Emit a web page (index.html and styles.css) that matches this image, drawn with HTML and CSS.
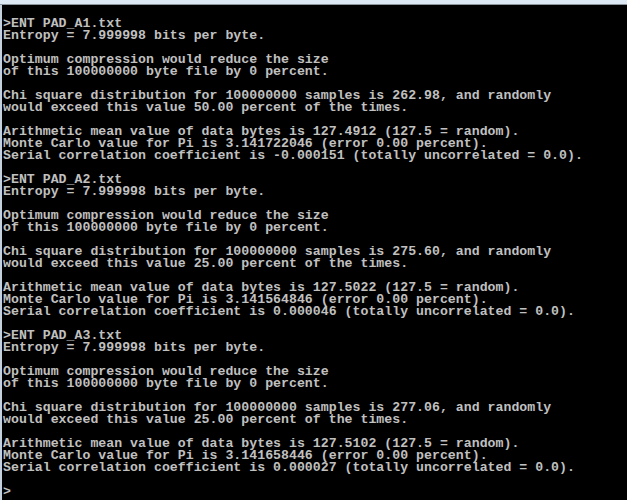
FILE: index.html
```html
<!DOCTYPE html>
<html>
<head>
<meta charset="utf-8">
<link rel="stylesheet" href="styles.css">
</head>
<body>
<div class="titlebar"></div>
<div class="console">
<pre class="output">&gt;ENT PAD_A1.txt
Entropy = 7.999998 bits per byte.

Optimum compression would reduce the size
of this 100000000 byte file by 0 percent.

Chi square distribution for 100000000 samples is 262.98, and randomly
would exceed this value 50.00 percent of the times.

Arithmetic mean value of data bytes is 127.4912 (127.5 = random).
Monte Carlo value for Pi is 3.141722046 (error 0.00 percent).
Serial correlation coefficient is -0.000151 (totally uncorrelated = 0.0).

&gt;ENT PAD_A2.txt
Entropy = 7.999998 bits per byte.

Optimum compression would reduce the size
of this 100000000 byte file by 0 percent.

Chi square distribution for 100000000 samples is 275.60, and randomly
would exceed this value 25.00 percent of the times.

Arithmetic mean value of data bytes is 127.5022 (127.5 = random).
Monte Carlo value for Pi is 3.141564846 (error 0.00 percent).
Serial correlation coefficient is 0.000046 (totally uncorrelated = 0.0).

&gt;ENT PAD_A3.txt
Entropy = 7.999998 bits per byte.

Optimum compression would reduce the size
of this 100000000 byte file by 0 percent.

Chi square distribution for 100000000 samples is 277.06, and randomly
would exceed this value 25.00 percent of the times.

Arithmetic mean value of data bytes is 127.5102 (127.5 = random).
Monte Carlo value for Pi is 3.141658446 (error 0.00 percent).
Serial correlation coefficient is 0.000027 (totally uncorrelated = 0.0).

&gt;</pre>
</div>
</body>
</html>
```
FILE: styles.css
```css
html, body {
  margin: 0;
  padding: 0;
  background: #000;
  width: 627px;
  height: 500px;
  overflow: hidden;
}

.titlebar {
  height: 4px;
  background: #dce8f4;
  border-bottom: 1px solid #8c949c;
}

.console {
  border-left: 2px solid #c4d0dc;
  height: 495px;
  box-sizing: border-box;
  background: #000;
}

.output {
  margin: 0;
  padding: 13px 0 0 1px;
  font-family: "Liberation Mono", "DejaVu Sans Mono", monospace;
  font-size: 13.2px;
  letter-spacing: 0.03px;
  font-weight: bold;
  line-height: 12px;
  color: #c0c0c0;
  white-space: pre;
}
```
